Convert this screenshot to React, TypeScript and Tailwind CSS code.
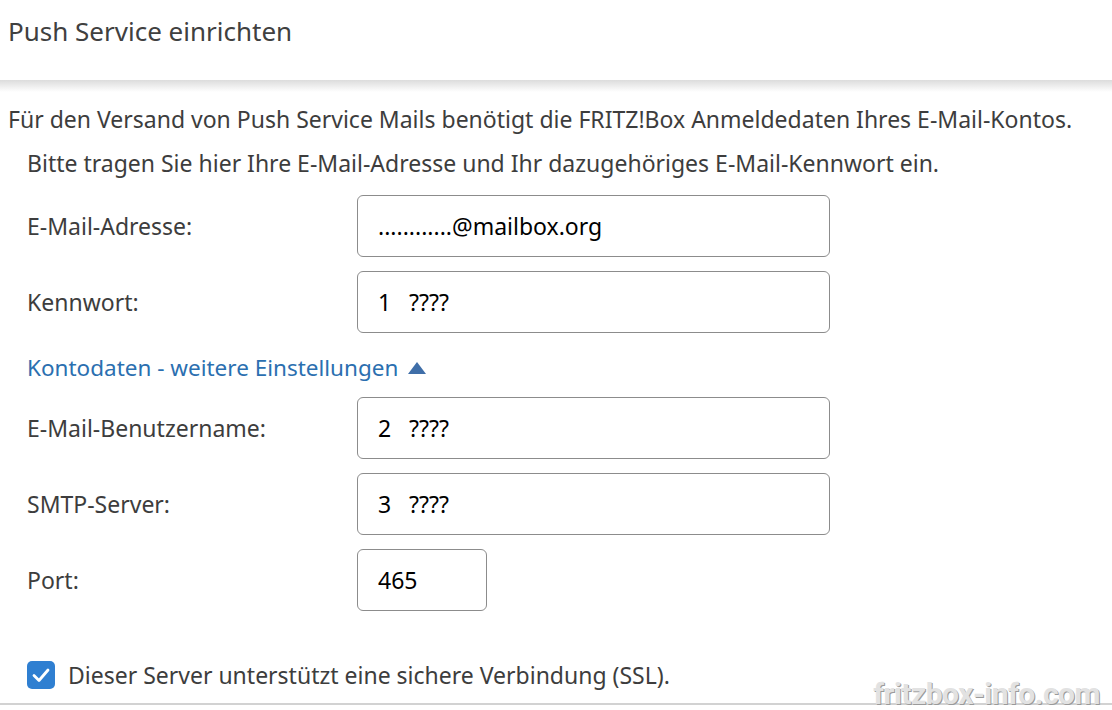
const font = { fontFamily: "'Noto Sans', 'Lato', sans-serif" };

const Field = ({ label, value, narrow }: { label: string; value: string; narrow?: boolean }) => {
  return (
    <div className="flex items-center h-[62px]">
      <div className="w-[330px] text-[23px] text-[#3d3d3d]">{label}</div>
      <div
        className={
          (narrow ? "w-[130px] " : "w-[473px] ") +
          "h-[62px] border border-[#8c8c8c] rounded-[6px] flex items-center pl-[20px] text-[23px] text-black whitespace-pre"
        }
      >
        {value}
      </div>
    </div>
  );
};

const App = () => {
  return (
    <div className="relative w-[1112px] h-[710px] bg-white overflow-hidden" style={font}>
      <div className="h-[80px] px-2 pt-[15px] text-[26px] leading-[32px] text-[#404040]">Push Service einrichten</div>
      <div className="h-[12px] bg-gradient-to-b from-[#dcdcdc] to-white" />

      <p className="px-2 mt-[12px] text-[23px] text-[#3d3d3d] leading-[30px]">
        Für den Versand von Push Service Mails benötigt die FRITZ!Box Anmeldedaten Ihres E-Mail-Kontos.
      </p>

      <div className="pl-[27px]">
        <p className="mt-[14px] text-[23px] text-[#3d3d3d] leading-[30px]">
          Bitte tragen Sie hier Ihre E-Mail-Adresse und Ihr dazugehöriges E-Mail-Kennwort ein.
        </p>

        <div className="mt-[17px] flex flex-col gap-[14px]">
          <Field label="E-Mail-Adresse:" value="............@mailbox.org" />
          <Field label="Kennwort:" value="1   ????" />
        </div>

        <div className="h-[64px] pt-[6px] flex items-center gap-[10px] text-[22.5px] text-[#2b6fb0]">
          <span>Kontodaten - weitere Einstellungen</span>
          <svg width="18" height="12" viewBox="0 0 18 12">
            <polygon points="9,0 18,12 0,12" fill="#3f6ea8" />
          </svg>
        </div>

        <div className="flex flex-col gap-[14px]">
          <Field label="E-Mail-Benutzername:" value="2   ????" />
          <Field label="SMTP-Server:" value="3   ????" />
          <Field label="Port:" value="465" narrow />
        </div>

        <div className="mt-[47px] flex items-center gap-[13px]">
          <div className="w-[28px] h-[28px] rounded-[5px] bg-[#2f7fd1] flex items-center justify-center">
            <svg width="20" height="20" viewBox="0 0 20 20" fill="none">
              <path d="M3 10.5 L8 15.5 L17 5" stroke="white" strokeWidth="2.8" strokeLinecap="round" strokeLinejoin="round" />
            </svg>
          </div>
          <span className="text-[23px] text-[#3d3d3d]">Dieser Server unterstützt eine sichere Verbindung (SSL).</span>
        </div>
      </div>

      <div className="absolute left-0 right-0 top-[703px] h-[2px] bg-[#d2d2d2]" />
      <div
        className="absolute right-[12px] top-[679px] text-[30px] leading-[30px] font-bold text-[#e2e2e2]"
        style={{ fontFamily: "'Roboto', sans-serif", textShadow: "1px 1px 0 #9a9a9a", letterSpacing: "-0.5px" }}
      >
        fritzbox-info.com
      </div>
    </div>
  );
};

export default App;
